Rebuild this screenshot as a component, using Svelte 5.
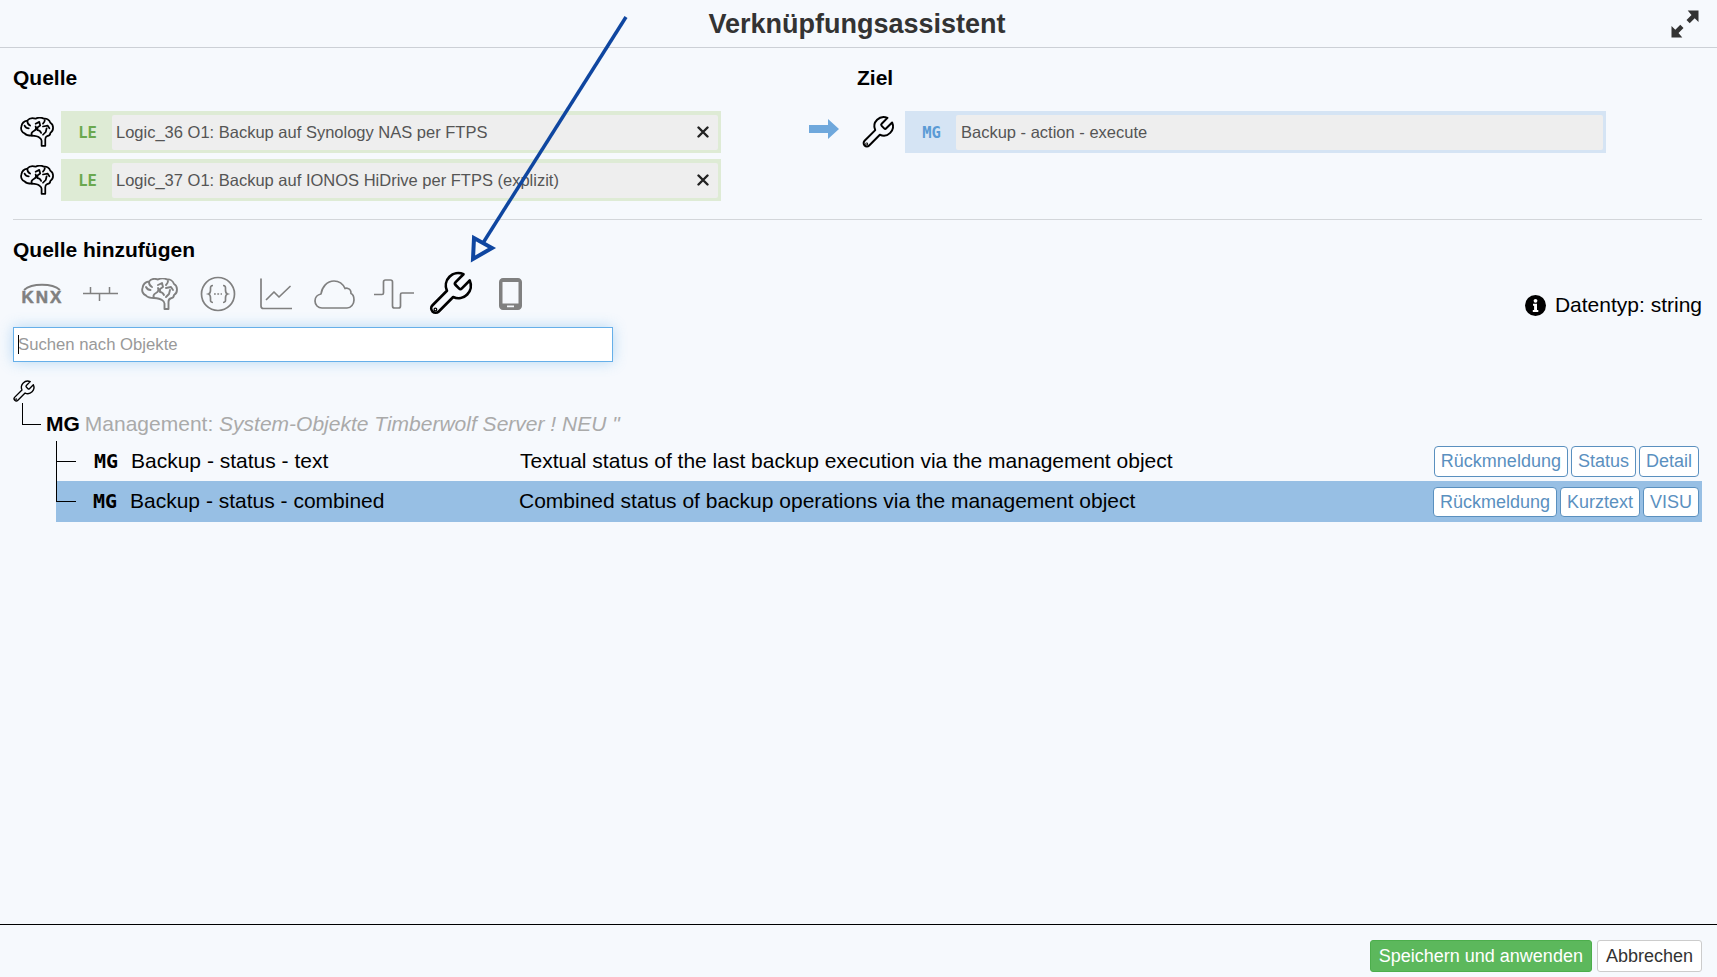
<script>
	const sources = [
		{ id: 1, text: 'Logic_36 O1: Backup auf Synology NAS per FTPS' },
		{ id: 2, text: 'Logic_37 O1: Backup auf IONOS HiDrive per FTPS (explizit)' }
	];

	const objects = [
		{
			name: 'Backup - status - text',
			desc: 'Textual status of the last backup execution via the management object',
			tags: ['Rückmneldung', 'Status', 'Detail'],
			selected: false
		},
		{
			name: 'Backup - status - combined',
			desc: 'Combined status of backup operations via the management object',
			tags: ['Rückmeldung', 'Kurztext', 'VISU'],
			selected: true
		}
	];
</script>

{#snippet wrench(size, width)}
	<svg width={size} height={size} viewBox="0 0 24 24" fill="none" stroke="currentColor" stroke-width={width} stroke-linejoin="round" stroke-linecap="round">
		<path d="M14.7 6.3a1 1 0 0 0 0 1.4l1.6 1.6a1 1 0 0 0 1.4 0l3.77-3.77a6 6 0 0 1-7.94 7.94l-6.91 6.91a2.12 2.12 0 0 1-3-3l6.91-6.91a6 6 0 0 1 7.94-7.94l-3.76 3.76z" />
		<circle cx="5" cy="19.4" r="0.3" />
	</svg>
{/snippet}

{#snippet brain(w, h, width)}
	<svg width={w} height={h} viewBox="0 0 37 32" fill="none" stroke="currentColor" stroke-width={width} stroke-linejoin="round" stroke-linecap="round">
		<path d="M27.500 31v-7c0-2 .5-3 2-3.500 2.500-.5 3.500-2 3.500-3.500 2-1 3-3 3-5.500 0-2.500-1-4.500-3-5.500-1-3-4-5-7-4.500C24 .5 20 0 17 1.500 14 .5 10 1 8 3.500 4.500 4 2 6.500 1.500 10 .5 13 2 16.500 5 17.500c2 2.500 5 2.500 8 2.500 3 .2 6 .5 8 2 1.500 1 2.500 2 2.500 3.500V31z" />
		<path d="M13 20c-1-2 0-4 2-5 2-1 3-3 2-5M8 4c0 3 1 4 3 5M5 9c1 2 2 3 4.500 3M17 7l4-2 1 4-3 2v3c2 0 3 1 4 3M27 3c0 2-1 3-2 4M25 10l5-1 2 3M29 12l-1 4c-1 1-2 2-3 3" />
	</svg>
{/snippet}

<div class="page">
	<header class="head">
		<h1>Verknüpfungsassistent</h1>
		<svg class="expand" width="28" height="28" viewBox="0 0 28 28" fill="currentColor">
			<path d="M27.500 .5v11.500l-3.800-3.800-5 5-3.200-3.200 5-5L16.700 .5zM.5 27.500V16l3.800 3.800 5-5 3.200 3.200-5 5 3.800 4.500z" />
		</svg>
	</header>

	<main class="content">
		<section class="link">
			<div class="source">
				<h2>Quelle</h2>
				{#each sources as s (s.id)}
					<div class="row">
						<span class="row-icon">{@render brain(34, 30, 1.900)}</span>
						<div class="chip le">
							<span class="code">LE</span>
							<div class="value">
								<span>{s.text}</span>
								<svg class="close" width="12" height="12" viewBox="0 0 12 12" stroke="#222" stroke-width="2.400" stroke-linecap="round">
									<path d="M1.500 1.500l9 9M10.500 1.500l-9 9" />
								</svg>
							</div>
						</div>
					</div>
				{/each}
			</div>
			<svg class="flow-arrow" width="30" height="20" viewBox="0 0 30 20" fill="#6fa8dc">
				<path d="M0 6h19V0l11 10-11 10v-6H0z" />
			</svg>
			<div class="target">
				<h2>Ziel</h2>
				<div class="row">
					<span class="row-icon target-icon">{@render wrench(37, 1.300)}</span>
					<div class="chip mg">
						<span class="code">MG</span>
						<div class="value"><span>Backup - action - execute</span></div>
					</div>
				</div>
			</div>
		</section>

		<hr />

		<h2 class="add-title">Quelle hinzufügen</h2>

		<div class="tools">
			<div class="picker">
				<div class="icons">
					<span class="tool knx">
						<svg width="46" height="24" viewBox="0 0 46 24" fill="none" stroke="currentColor">
							<path d="M5 8C13 1 33 1 41 8" stroke-width="1.800" />
							<text x="23.500" y="21" text-anchor="middle" fill="currentColor" stroke="currentColor" stroke-width="0.500" font-size="17" font-weight="700" font-family="'Liberation Sans', sans-serif" letter-spacing="2">KNX</text>
						</svg>
					</span>
					<span class="tool">
						<svg width="36" height="18" viewBox="0 0 36 18" fill="none" stroke="currentColor" stroke-width="1.500">
							<path d="M0 8.500h35M7.500 2v6.500M26.500 2v6.500M16.500 8.500V16" />
						</svg>
					</span>
					<span class="tool">{@render brain(37, 32, 1.900)}</span>
					<span class="tool">
						<svg width="36" height="36" viewBox="0 0 36 36" fill="none" stroke="currentColor" stroke-width="1.700">
							<ellipse cx="18" cy="18" rx="16.500" ry="16.500" />
							<path d="M13 9.500c-3 0-2.500 2-2.500 4.500 0 3-.5 3.500-2 4 1.500.5 2 1 2 4 0 2.500-.5 4.500 2.500 4.500M23 9.500c3 0 2.500 2 2.500 4.500 0 3 .5 3.500 2 4-1.500.5-2 1-2 4 0 2.500.5 4.500-2.500 4.500" />
							<path d="M14 18h8" stroke-dasharray="1.800 1.500" />
						</svg>
					</span>
					<span class="tool">
						<svg width="32" height="32" viewBox="0 0 32 32" fill="none" stroke="currentColor" stroke-width="1.700" stroke-linejoin="round" stroke-linecap="round">
							<path d="M1 1v27c0 1.500 1 2.500 2.500 2.500H32M6.500 21.500l7.500-7.500 5 5L30 8.500" />
						</svg>
					</span>
					<span class="tool">
						<svg width="41" height="29" viewBox="0 0 41 29" fill="none" stroke="currentColor" stroke-width="1.700" stroke-linejoin="round">
							<path d="M8 28C4 28 1 25 1 21c0-3.500 2.500-6.500 6-7C8 7 13 1 20 1c5 0 9 3 11 7.500 1-.5 2-.5 3 0 2 .5 3 2.500 3 5 2.500 1 3 4 3 6.500 0 4-3 8-7 8z" />
						</svg>
					</span>
					<span class="tool">
						<svg width="41" height="30" viewBox="0 0 41 30" fill="none" stroke="currentColor" stroke-width="1.700" stroke-linejoin="round">
							<path d="M1 15.500h8c1 0 1.500-.5 1.500-1.500V3c0-1.200.8-2 2-2h5c1.200 0 2 .8 2 2v24c0 1.200.8 2 2 2h4c1.200 0 2-.8 2-2V15.500c0-1 .5-1.500 1.500-1.500H41" />
						</svg>
					</span>
					<span class="tool active">{@render wrench(50, 1.300)}</span>
					<span class="tool">
						<svg width="23" height="32" viewBox="0 0 23 32" fill="currentColor">
							<path fill-rule="evenodd" d="M4 0h15c2.200 0 4 1.800 4 4v24c0 2.200-1.800 4-4 4H4c-2.200 0-4-1.800-4-4V4c0-2.200 1.800-4 4-4zm-.5 4v21.500h16V4zM8 27.500v1.800h7v-1.800z" />
						</svg>
					</span>
				</div>
				<div class="search">
					<input type="text" placeholder="Suchen nach Objekte" />
					<i class="caret"></i>
				</div>
			</div>
			<div class="datatype">
				<svg width="21" height="21" viewBox="0 0 21 21">
					<circle cx="10.500" cy="10.500" r="10.500" fill="#000" />
					<circle cx="10.500" cy="5.800" r="1.900" fill="#fff" />
					<path d="M8 8.800h4v6.200h1.300v1.900H7.800V15h1.300v-4.300H8z" fill="#fff" />
				</svg>
				<span>Datentyp: string</span>
			</div>
		</div>

		<div class="tree">
			<span class="tree-icon">{@render wrench(25, 1.300)}</span>
			<div class="group">
				<i class="elbow"></i>
				<b>MG</b>
				<span class="group-text">Management: <em>System-Objekte Timberwolf Server ! NEU "</em></span>
			</div>
			<ul class="objects">
				{#each objects as o}
					<li class="object" class:selected={o.selected}>
						<span class="mono">MG</span>
						<span class="name">{o.name}</span>
						<span class="desc">{o.desc}</span>
						<span class="tags">
							{#each o.tags as t}
								<span class="tag">{t}</span>
							{/each}
						</span>
					</li>
				{/each}
			</ul>
		</div>
	</main>

	<footer class="foot">
		<button class="save">Speichern und anwenden</button>
		<button class="cancel">Abbrechen</button>
	</footer>

	<!-- Markierungspfeil aus dem Screenshot -->
	<svg class="annotation" width="1717" height="977" viewBox="0 0 1717 977" fill="none" stroke="#0f46a0" stroke-width="3.500">
		<path d="M626 17L483 243" />
		<path d="M473 259l1-21 18 10z" stroke-width="4" />
	</svg>
</div>

<style>
	:global(body) {
		background: #f6f9fd;
		color: #000;
		font-family: 'Liberation Sans', Arial, sans-serif;
	}

	.page {
		position: relative;
		display: flex;
		flex-direction: column;
		height: 977px;
		overflow: hidden;
	}

	.head {
		position: relative;
		flex: none;
		display: flex;
		align-items: center;
		justify-content: center;
		border-bottom: 1px solid #ccd0d6;
		box-sizing: border-box;
		height: 48px;
		padding: 1px 3px 0 0;
	}

	h1 {
		margin: 0;
		font-size: 27px;
		line-height: 47px;
		font-weight: 700;
		color: #333;
	}

	.expand {
		position: absolute;
		top: 10px;
		right: 18px;
		color: #333;
	}

	.content {
		flex: 1;
		padding: 0 15px 0 13px;
	}

	h2 {
		margin: 0;
		font-size: 21px;
		line-height: 24px;
		font-weight: 700;
	}

	.link {
		display: flex;
		padding-top: 18px;
		height: 153px;
		box-sizing: content-box;
	}

	.source {
		width: 708px;
		flex: none;
	}

	.source h2,
	.target h2 {
		margin-bottom: 21px;
	}

	.row {
		display: flex;
		align-items: center;
		height: 42px;
		margin-bottom: 6px;
	}

	.row-icon {
		display: flex;
		justify-content: center;
		width: 48px;
		flex: none;
	}

	.flow-arrow {
		margin: 53px 0 0 88px;
		flex: none;
	}

	.target {
		margin-left: 18px;
		flex: none;
	}

	.target-icon {
		width: 48px;
		justify-content: flex-start;
		margin-left: 2px;
	}

	.chip {
		display: flex;
		align-items: stretch;
		height: 42px;
		box-sizing: border-box;
		padding: 4px 3px 3px 0;
	}

	.chip.le {
		width: 661px;
		background: #deebd5;
	}

	.chip.mg {
		width: 701px;
		margin-left: -2px;
		background: #d5e4f4;
	}

	.code {
		flex: none;
		width: 51px;
		box-sizing: border-box;
		padding-left: 2px;
		align-self: center;
		text-align: center;
		font-family: 'DejaVu Sans Mono', monospace;
		font-size: 15.500px;
		font-weight: 700;
	}

	.le .code {
		color: #6aa84f;
	}

	.mg .code {
		color: #5b9bd5;
	}

	.value {
		flex: 1;
		display: flex;
		align-items: center;
		justify-content: space-between;
		padding: 0 9px 0 4px;
		font-size: 16.500px;
		color: #555;
		background: #eeeeee;
		border-radius: 2px;
	}

	.mg .value {
		padding-left: 5px;
	}

	.close {
		margin-top: -2px;
	}

	hr {
		margin: 0 0 18px;
		border: 0;
		border-top: 1px solid #d3d6da;
	}

	.tools {
		display: flex;
		justify-content: space-between;
		margin-top: 10px;
	}

	.picker {
		width: 600px;
	}

	.icons {
		display: flex;
		height: 44px;
		margin-bottom: 11px;
	}

	.tool {
		display: flex;
		align-items: center;
		justify-content: center;
		width: 58.500px;
		color: #808080;
	}

	.tool.active {
		color: #000;
		padding-right: 4px;
		box-sizing: border-box;
	}

	.search {
		position: relative;
		height: 35px;
	}

	input {
		display: block;
		width: 100%;
		height: 100%;
		box-sizing: border-box;
		padding: 0 4px;
		border: 1px solid #66afe9;
		outline: none;
		background: #fff;
		font-family: inherit;
		font-size: 16.700px;
		box-shadow: 0 0 14px rgba(102, 175, 233, 0.45);
	}

	input::placeholder {
		color: #999;
		opacity: 1;
	}

	.caret {
		position: absolute;
		left: 5px;
		top: 8px;
		width: 1px;
		height: 19px;
		background: #000;
	}

	.datatype {
		display: flex;
		align-items: center;
		gap: 9px;
		height: 24px;
		margin-top: 21px;
		font-size: 21px;
		color: #000;
	}

	.tree {
		margin-top: 17px;
	}

	.tree-icon {
		display: block;
		height: 24px;
		margin-left: -2px;
		line-height: 0;
	}

	.group {
		position: relative;
		display: flex;
		align-items: flex-start;
		gap: 5px;
		height: 38px;
		padding-left: 33px;
		box-sizing: border-box;
		padding-top: 9px;
		font-size: 21px;
		line-height: 24px;
	}

	.elbow {
		position: absolute;
		left: 9px;
		top: 0;
		width: 18px;
		height: 21px;
		border-left: 1px solid #000;
		border-bottom: 1px solid #000;
	}

	.group b {
		font-weight: 700;
	}

	.group-text {
		color: #aaa;
	}

	.objects {
		margin: 0 0 0 43px;
		padding: 0;
		list-style: none;
	}

	.object {
		position: relative;
		display: flex;
		align-items: center;
		height: 40px;
		padding-left: 38px;
		font-size: 21px;
	}

	.object.selected {
		height: 41px;
		padding-left: 37px;
		background: #97bfe4;
	}

	.selected .mono,
	.selected .name,
	.selected .desc {
		margin-top: -2px;
	}

	.object::before {
		content: '';
		position: absolute;
		left: 0;
		top: 0;
		width: 19px;
		height: 20px;
		border-left: 1px solid #000;
		border-bottom: 1px solid #000;
	}

	.object:not(.selected)::after {
		content: '';
		position: absolute;
		left: 0;
		top: 20px;
		height: 20px;
		border-left: 1px solid #000;
	}

	.mono {
		flex: none;
		width: 37px;
		font-family: 'DejaVu Sans Mono', monospace;
		font-size: 20px;
		font-weight: 700;
	}

	.name {
		flex: none;
		width: 389px;
	}

	.desc {
		flex: 1;
	}

	.tags {
		display: flex;
		gap: 3px;
		padding-right: 3px;
	}

	.tag {
		box-sizing: border-box;
		height: 31px;
		padding: 0 6px;
		line-height: 29px;
		font-size: 18px;
		color: #5a90bf;
		background: #fff;
		border: 1px solid #5a90bf;
		border-radius: 4px;
	}

	.selected .tag {
		height: 30px;
		line-height: 28px;
	}

	.foot {
		flex: none;
		display: flex;
		justify-content: flex-end;
		gap: 5px;
		height: 53px;
		box-sizing: border-box;
		padding: 15px 15px 5px 0;
		border-top: 1px solid #000;
	}

	.foot button {
		height: 32px;
		padding: 0 8px;
		font-family: inherit;
		font-size: 18px;
		border-radius: 3px;
		cursor: pointer;
	}

	.save {
		color: #fff;
		background: #5cb85c;
		border: 1px solid #4cae4c;
	}

	.cancel {
		color: #333;
		background: #fff;
		border: 1px solid #ccc;
	}

	.annotation {
		position: absolute;
		left: 0;
		top: 0;
		pointer-events: none;
	}
</style>
